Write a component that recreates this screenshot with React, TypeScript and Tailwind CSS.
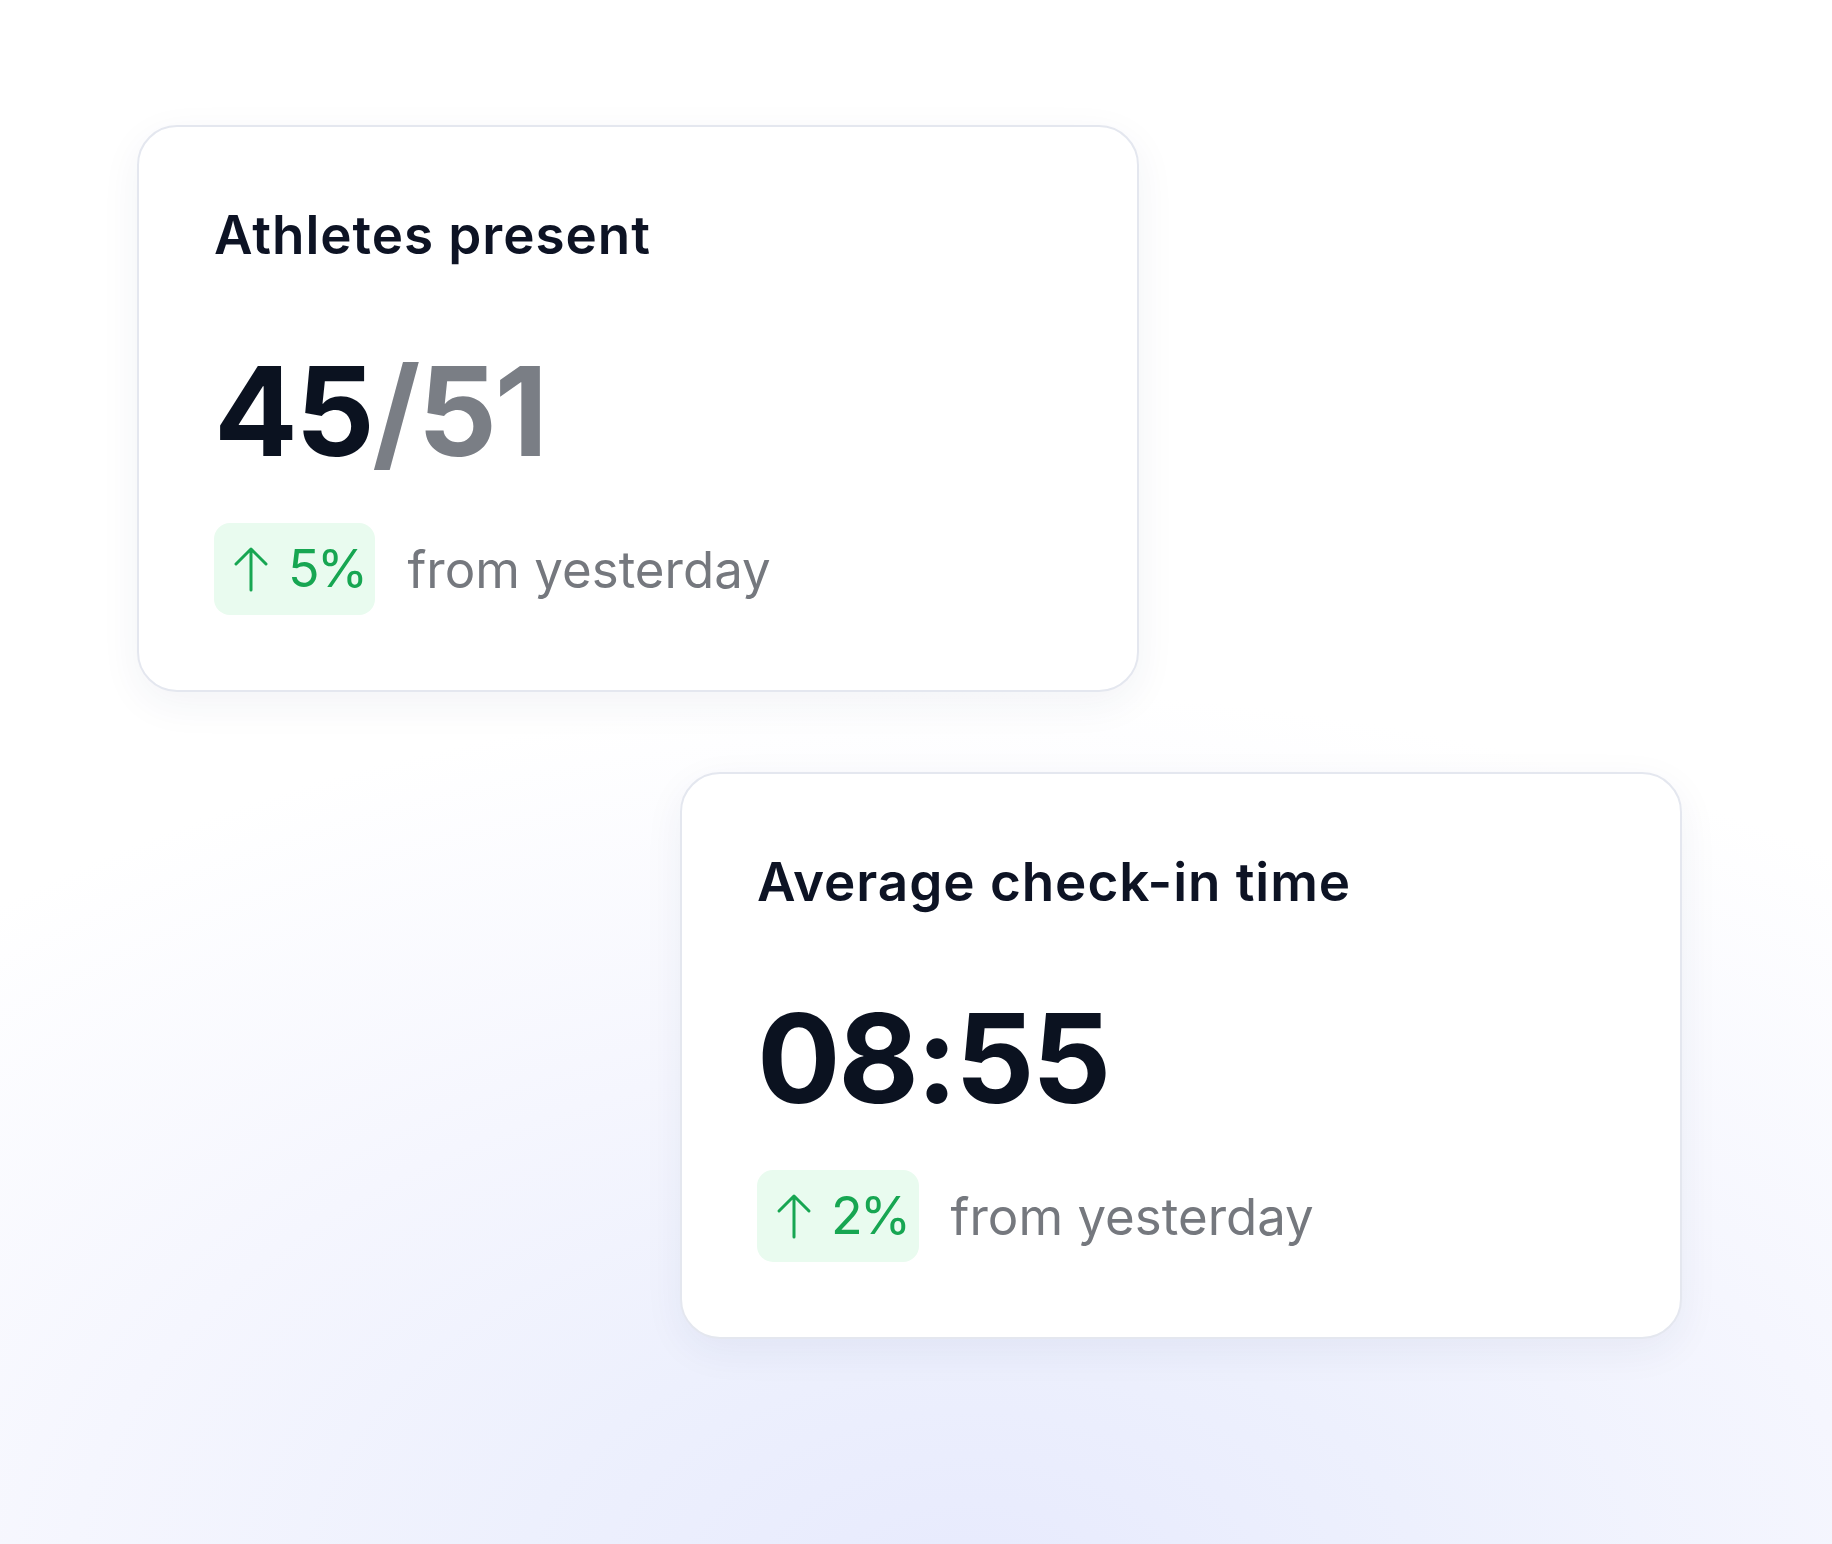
import React from 'react'

function ArrowUp() {
  return (
    <svg width="36" height="46" viewBox="0 0 36 46" fill="none" className="shrink-0">
      <path d="M18 44V3M3 18L18 3l15 15" stroke="#17a652" strokeWidth="3" strokeLinecap="round" strokeLinejoin="round" />
    </svg>
  )
}

function StatCard({ title, value, change }: { title: string; value: React.ReactNode; change: string }) {
  return (
    <div className="w-[1002px] rounded-[40px] border-2 border-[#e4e7ef] bg-white pl-[75px] pt-[78px] pb-[75px] shadow-[0_12px_40px_rgba(40,50,110,0.06)]">
      <h2 className="text-[53px] leading-[60px] font-semibold text-[#0d1324] tracking-[0.018em]">{title}</h2>
      <div className="mt-[84px] text-[124px] leading-none font-bold text-[#0b1220] tracking-[-0.02em]">{value}</div>
      <div className="mt-[50px] flex items-center gap-[32px]">
        <div className="flex h-[92px] items-center gap-[19px] rounded-[16px] bg-[#e9fbef] pl-[19px] pr-[10px]">
          <ArrowUp />
          <span className="text-[52px] leading-none font-normal text-[#17a652] tracking-[-0.05em]">{change}</span>
        </div>
        <span className="text-[51px] leading-none font-normal text-[#75787e]">from yesterday</span>
      </div>
    </div>
  )
}

export default function App() {
  return (
    <div className="min-h-[1544px] w-full overflow-hidden bg-[radial-gradient(1500px_900px_at_53%_103%,#e7eafd_0%,#edf0fd_30%,#f5f6fe_60%,#ffffff_100%)] font-['Inter',sans-serif]">
      <div className="flex flex-col pt-[125px]">
        <div className="ml-[137px]">
          <StatCard
            title="Athletes present"
            value={<>45<span className="text-[#7a7e85]">/51</span></>}
            change="5%"
          />
        </div>
        <div className="ml-[680px] mt-[80px]">
          <StatCard title="Average check-in time" value="08:55" change="2%" />
        </div>
      </div>
    </div>
  )
}
